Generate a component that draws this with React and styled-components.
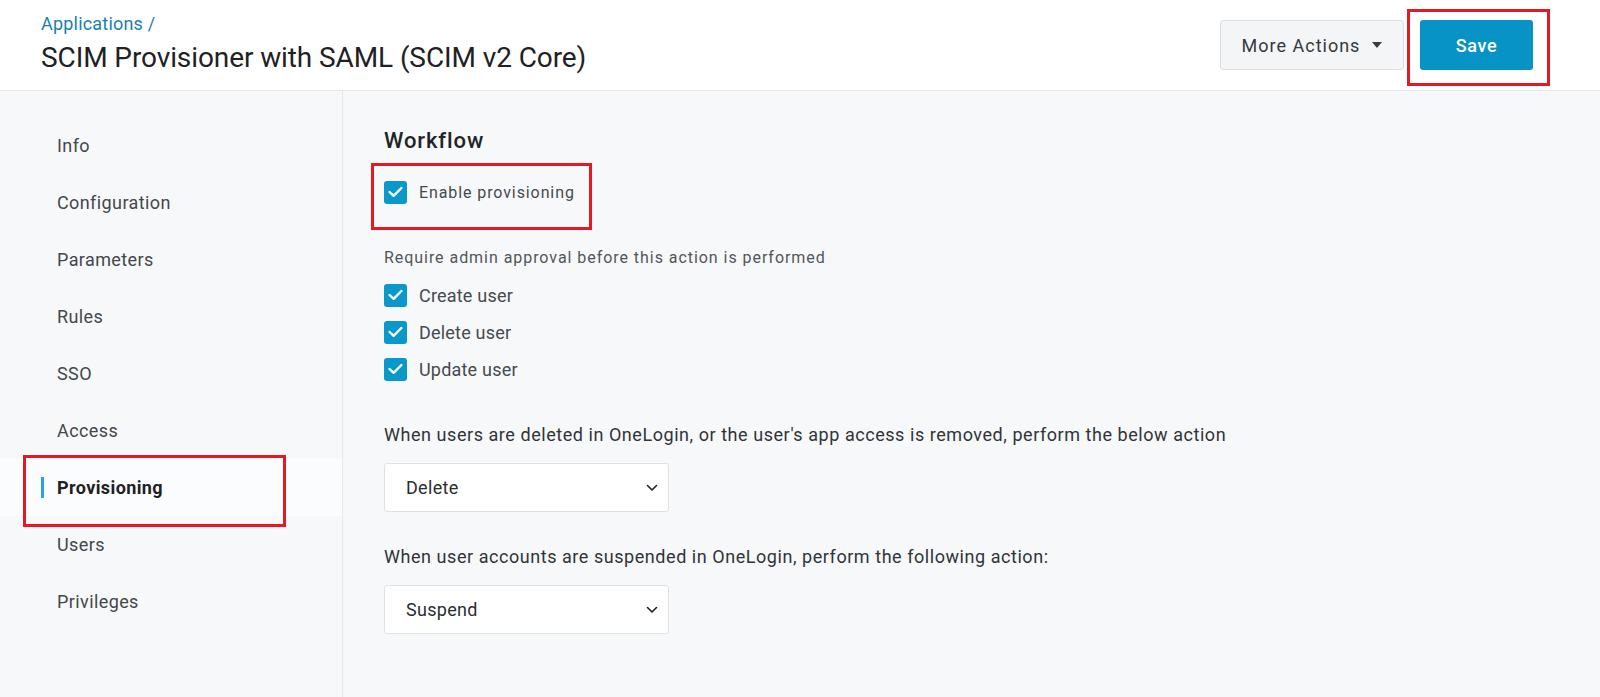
import styled, { createGlobalStyle } from 'styled-components'

const GlobalStyle = createGlobalStyle`
  html, body {
    margin: 0;
    padding: 0;
    background: #f7f8f9;
    font-family: Roboto, "Liberation Sans", Arial, sans-serif;
  }
  * {
    box-sizing: border-box;
  }
`

const navItems = [
  'Info',
  'Configuration',
  'Parameters',
  'Rules',
  'SSO',
  'Access',
  'Provisioning',
  'Users',
  'Privileges',
]

const approvals = ['Create user', 'Delete user', 'Update user']

const CheckIcon = () => (
  <svg width="15" height="12" viewBox="0 0 15 12" fill="none">
    <path d="M1.6 6L5.6 9.8L13.4 2" stroke="#fff" strokeWidth="2.4" strokeLinecap="round" strokeLinejoin="round" />
  </svg>
)

const Checkbox = ({ label, small }) => (
  <CheckRow>
    <Box>
      <CheckIcon />
    </Box>
    <CheckLabel $small={small}>{label}</CheckLabel>
  </CheckRow>
)

const Select = ({ value }) => (
  <SelectBox>
    <span>{value}</span>
    <svg width="12" height="8" viewBox="0 0 12 8" fill="none">
      <path d="M1.5 1.5L6 6L10.5 1.5" stroke="#222" strokeWidth="1.6" strokeLinecap="round" strokeLinejoin="round" />
    </svg>
  </SelectBox>
)

const App = () => {
  return (
    <>
      <GlobalStyle />
      <Page>
        <Header>
          <div>
            <Breadcrumb>Applications /</Breadcrumb>
            <Title>SCIM Provisioner with SAML (SCIM v2 Core)</Title>
          </div>
          <Actions>
            <MoreButton>
              More Actions
              <svg width="10" height="6" viewBox="0 0 10 6">
                <path d="M0 0H10L5 6Z" fill="#3a3d40" />
              </svg>
            </MoreButton>
            <SaveMark>
              <SaveButton>Save</SaveButton>
            </SaveMark>
          </Actions>
        </Header>
        <Body>
          <Sidebar>
            {navItems.map((item) => (
              <NavItem key={item} $active={item === 'Provisioning'}>
                {item}
              </NavItem>
            ))}
          </Sidebar>
          <Main>
            <SectionTitle>Workflow</SectionTitle>
            <EnableMark>
              <Checkbox label="Enable provisioning" small />
            </EnableMark>
            <Hint>Require admin approval before this action is performed</Hint>
            <CheckList>
              {approvals.map((a) => (
                <Checkbox key={a} label={a} />
              ))}
            </CheckList>
            <FieldLabel $top={44}>
              When users are deleted in OneLogin, or the user's app access is removed, perform the below action
            </FieldLabel>
            <Select value="Delete" />
            <FieldLabel $top={34}>
              When user accounts are suspended in OneLogin, perform the following action:
            </FieldLabel>
            <Select value="Suspend" />
          </Main>
        </Body>
      </Page>
    </>
  )
}

export default App

const Page = styled.div`
  min-height: 697px;
  display: flex;
  flex-direction: column;
`

const Header = styled.header`
  height: 91px;
  background: #fff;
  border-bottom: 1px solid #e4e6e8;
  display: flex;
  align-items: flex-start;
  justify-content: space-between;
  padding: 12px 67px 0 41px;
`

const Breadcrumb = styled.div`
  color: #1a7fae;
  font-size: 18px;
  letter-spacing: 0.2px;
  line-height: 24px;
`

const Title = styled.h1`
  margin: 6px 0 0;
  font-size: 28px;
  letter-spacing: -0.1px;
  line-height: 32px;
  font-weight: 400;
  color: #1f2224;
`

const Actions = styled.div`
  display: flex;
  align-items: center;
  gap: 16px;
  margin-top: 8px;
`

const MoreButton = styled.div`
  height: 50px;
  width: 184px;
  display: flex;
  align-items: center;
  justify-content: center;
  gap: 12px;
  background: #f4f5f6;
  border: 1px solid #dcdfe2;
  border-radius: 3px;
  font-size: 18px;
  letter-spacing: 1px;
  color: #35393d;
`

const SaveMark = styled.div`
  position: relative;

  &::after {
    content: '';
    position: absolute;
    left: -13px;
    right: -17px;
    top: -11px;
    bottom: -16px;
    border: 3px solid #e81820;
    pointer-events: none;
  }
`

const SaveButton = styled.div`
  width: 113px;
  height: 50px;
  display: flex;
  align-items: center;
  justify-content: center;
  background: #0893c6;
  border-radius: 3px;
  color: #fff;
  font-size: 18px;
  letter-spacing: 0.6px;
  font-weight: 500;
`

const Body = styled.div`
  flex: 1;
  display: flex;
`

const Sidebar = styled.nav`
  width: 343px;
  flex-shrink: 0;
  border-right: 1px solid #e6e8ea;
  padding-top: 26px;
`

const NavItem = styled.div`
  position: relative;
  height: 57px;
  display: flex;
  align-items: center;
  padding-left: 57px;
  font-size: 18px;
  letter-spacing: 0.4px;
  color: ${(p) => (p.$active ? '#1d2024' : '#43474c')};
  font-weight: ${(p) => (p.$active ? 700 : 400)};
  background: ${(p) => (p.$active ? '#fbfcfd' : 'transparent')};

  ${(p) =>
    p.$active &&
    `
    &::before {
      content: '';
      position: absolute;
      left: 41px;
      top: 18px;
      width: 3px;
      height: 21px;
      background: #2ba3d9;
    }
    &::after {
      content: '';
      position: absolute;
      left: 23px;
      width: 257px;
      top: -4px;
      height: 66px;
      border: 3px solid #e81820;
    }
  `}
`

const Main = styled.main`
  flex: 1;
  padding: 37px 0 0 41px;
  display: flex;
  flex-direction: column;
  align-items: flex-start;
`

const SectionTitle = styled.h2`
  margin: 0;
  font-size: 22px;
  letter-spacing: 0.9px;
  line-height: 26px;
  font-weight: 500;
  color: #222528;
`

const EnableMark = styled.div`
  position: relative;
  margin-top: 27px;

  &::after {
    content: '';
    position: absolute;
    left: -13px;
    top: -18px;
    width: 215px;
    height: 61px;
    border: 3px solid #e81820;
  }
`

const CheckRow = styled.div`
  display: flex;
  align-items: center;
  gap: 12px;
  height: 22px;
`

const Box = styled.div`
  width: 23px;
  height: 23px;
  border-radius: 3px;
  background: #0a97c9;
  display: flex;
  align-items: center;
  justify-content: center;
`

const CheckLabel = styled.span`
  font-size: ${(p) => (p.$small ? '16px' : '18px')};
  letter-spacing: ${(p) => (p.$small ? '0.9px' : '0.2px')};
  color: #464a4f;
`

const Hint = styled.div`
  margin-top: 45px;
  font-size: 16px;
  letter-spacing: 0.95px;
  line-height: 20px;
  color: #52565b;
`

const CheckList = styled.div`
  margin-top: 16px;
  display: flex;
  flex-direction: column;
  gap: 15px;
`

const FieldLabel = styled.div`
  margin-top: ${(p) => p.$top}px;
  font-size: 18px;
  letter-spacing: 0.55px;
  line-height: 22px;
  color: #303438;
`

const SelectBox = styled.div`
  margin-top: 17px;
  width: 285px;
  height: 49px;
  background: #fff;
  border: 1px solid #dfe2e5;
  border-radius: 3px;
  display: flex;
  align-items: center;
  justify-content: space-between;
  padding: 0 10px 0 21px;
  font-size: 18px;
  letter-spacing: 0.3px;
  color: #2a2d31;
`
